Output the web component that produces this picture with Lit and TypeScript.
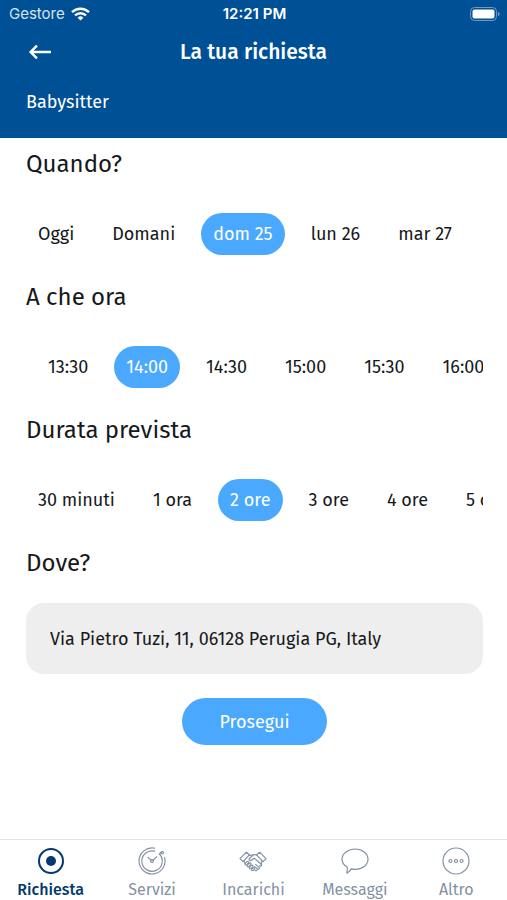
import { LitElement, html, svg, css, nothing } from "lit";
import { customElement, property, state } from "lit/decorators.js";
import { classMap } from "lit/directives/class-map.js";

const uiFont = css`"Fira Sans", "Noto Sans", sans-serif`;

const tabIcons = {
  request: svg`
    <circle cx="14" cy="14" r="12" stroke-width="2"/>
    <circle cx="14" cy="14" r="5" fill="currentColor" stroke="none"/>`,
  services: svg`
    <path d="M16.4 1.2A13 13 0 1 0 26.6 10.6"/>
    <path d="M21.4 7A10.2 10.2 0 1 1 16.6 4.2"/>
    <path d="M21.4 7l2-2"/>
    <circle cx="24.4" cy="5.8" r="1.2"/>
    <path d="M10 10.4l3 2.6M18.8 9.6l-3.8 3.6"/>
    <circle cx="14" cy="14" r="1.4"/>`,
  jobs: svg`
    <path d="M1 11.6L7.4 5.2l3 2.6-6.4 6.8z"/>
    <path d="M27 11.6l-6.4-6.4-3 2.6 6.4 6.8z"/>
    <path d="M10 8.2c1.6.4 2.6.2 4-.4 1.6-.6 2.8 0 4.2.4"/>
    <path d="M14.4 7.8l-4.2 4c-.6 1 .8 2.2 2 1.6l3-2.2 7 6c1 1.2-.6 2.6-1.8 1.6"/>
    <path d="M5 13.8l1.2 2.4M23 14l-1 3"/>
    <path d="M6.2 16.4l1.8-1.8c1-.8 2.2.4 1.4 1.4l-1.4 1.6c-1.2 1-2.6-.2-1.8-1.2zM8.4 18.2l2-2c1-.8 2.2.4 1.4 1.4l-1.8 2c-1.2.8-2.4-.4-1.6-1.4zM10.6 20.2l1.8-1.8c1-.8 2.2.4 1.4 1.4l-1.6 1.8c-1.2.8-2.4-.4-1.6-1.4zM12.8 22l1.2-1.2c1-.8 2.2.4 1.4 1.4l-1 1.2c-1 .8-2.4-.4-1.6-1.4z"/>
    <path d="M16.6 17.4l3.6 3c.6 1.2-.6 2.2-1.8 1.4l-2.8-2.2M18.2 22c.4 1.4-1 2-2.2 1.4"/>`,
  messages: svg`
    <path d="M14.200 2C21.200 2 27 6.400 27 12.200S21.200 22.400 14.200 22.400c-1.400 0-2.800-.2-4-.5-1.400 2.300-2.800 3.700-4.400 4.300.5-2 .7-4 .4-6.200C3 18.200 1 15.400 1 12.200 1 6.400 7.200 2 14.200 2z"/>`,
  more: svg`
    <circle cx="14" cy="14" r="13"/>
    <circle cx="8.400" cy="14" r="1.500"/>
    <circle cx="14" cy="14" r="1.500"/>
    <circle cx="19.600" cy="14" r="1.500"/>`,
};

type TabId = keyof typeof tabIcons;

@customElement("chip-group")
class ChipGroup extends LitElement {
  @property() heading = "";
  @property({ attribute: false }) options: string[] = [];
  @property() selected = "";
  @property({ type: Boolean }) inset = false;

  static styles = css`
    :host {
      display: block;
    }
    .heading {
      margin: 0 0 33px;
      font-size: 24px;
      line-height: 32px;
      font-weight: 400;
    }
    .row {
      display: flex;
      gap: 14px;
      overflow-x: auto;
      scrollbar-width: none;
    }
    .inset {
      padding-left: 10px;
    }
    .chip {
      flex: none;
      height: 42px;
      padding: 0 12px;
      border: 0;
      border-radius: 21px;
      background: transparent;
      color: inherit;
      font: inherit;
      white-space: nowrap;
      cursor: pointer;
    }
    .on {
      background: #4aa9ff;
      color: #fff;
    }
  `;

  render() {
    return html`
      <h2 class="heading" id="heading">${this.heading}</h2>
      <div class=${classMap({ row: true, inset: this.inset })} role="group" aria-labelledby="heading">
        ${this.options.map(
          (option) => html`<button
            type="button"
            class=${classMap({ chip: true, on: option === this.selected })}
            aria-pressed=${option === this.selected}
            @click=${() => (this.selected = option)}
          >${option}</button>`
        )}
      </div>
    `;
  }
}

@customElement("tab-bar")
class TabBar extends LitElement {
  @state() current: TabId = "request";

  private tabs: { id: TabId; label: string }[] = [
    { id: "request", label: "Richiesta" },
    { id: "services", label: "Servizi" },
    { id: "jobs", label: "Incarichi" },
    { id: "messages", label: "Messaggi" },
    { id: "more", label: "Altro" },
  ];

  static styles = css`
    :host {
      display: block;
    }
    .tabs {
      display: grid;
      grid-template-columns: repeat(5, 1fr);
      height: 60px;
      border-top: 1px solid #e4e5e6;
    }
    .tab {
      display: flex;
      flex-direction: column;
      align-items: center;
      gap: 4px;
      padding-top: 7px;
      color: #8492a3;
      font-size: 16px;
      line-height: 22px;
      text-decoration: none;
    }
    .current {
      color: #06396f;
      font-weight: 500;
    }
    .icon {
      flex: none;
      width: 28px;
      height: 28px;
      fill: none;
      stroke: currentColor;
      stroke-width: 1.2;
      stroke-linecap: round;
      stroke-linejoin: round;
    }
  `;

  render() {
    return html`
      <nav class="tabs" aria-label="Principale">
        ${this.tabs.map(
          ({ id, label }) => html`<a
            href="#${id}"
            class=${classMap({ tab: true, current: id === this.current })}
            aria-current=${id === this.current ? "page" : nothing}
            @click=${() => (this.current = id)}
          ><svg class="icon" viewBox="0 0 28 28" aria-hidden="true">${tabIcons[id]}</svg>${label}</a>`
        )}
      </nav>
    `;
  }
}

@customElement("app-root")
class AppRoot extends LitElement {
  static styles = css`
    :host {
      display: flex;
      flex-direction: column;
      min-height: 100vh;
      background: #fff;
      color: #16191c;
      font-family: ${uiFont};
      font-size: 18px;
      line-height: 24px;
    }
    .top {
      padding-bottom: 24px;
      background: #005096;
      color: #fff;
    }
    .status {
      display: grid;
      grid-template-columns: 1fr auto 1fr;
      align-items: center;
      height: 28px;
      padding: 0 7px 0 9px;
      font-family: Inter, sans-serif;
      font-size: 15px;
      line-height: 20px;
    }
    .carrier {
      display: flex;
      align-items: center;
      gap: 6px;
      color: #d5e4f1;
    }
    .clock {
      font-weight: 600;
    }
    .battery {
      justify-self: end;
    }
    .bar {
      display: grid;
      grid-template-columns: 1fr auto 1fr;
      align-items: center;
      height: 48px;
      padding: 0 26px;
    }
    .back {
      display: flex;
      justify-self: start;
      padding: 4px 2px;
      border: 0;
      background: none;
      color: inherit;
      cursor: pointer;
    }
    .title {
      margin: 0;
      font-size: 21px;
      line-height: 28px;
      font-weight: 500;
    }
    .service {
      margin: 14px 26px 0;
    }
    .form {
      display: flex;
      flex: 1;
      flex-direction: column;
      gap: 26px;
      padding: 10px 24px 26px 26px;
    }
    .place {
      display: flex;
      flex-direction: column;
      gap: 24px;
    }
    .place-label {
      font-size: 24px;
      line-height: 32px;
    }
    .address {
      box-sizing: border-box;
      width: 100%;
      height: 71px;
      padding: 0 24px;
      border: 0;
      border-radius: 18px;
      background: #eee;
      color: inherit;
      font: inherit;
    }
    .submit {
      align-self: center;
      height: 47px;
      padding: 0 38px;
      border: 0;
      border-radius: 24px;
      background: #4aa9ff;
      color: #fff;
      font: inherit;
      cursor: pointer;
    }
  `;

  render() {
    return html`
      <header class="top">
        <div class="status">
          <span class="carrier">Gestore
            <svg width="19" height="14" viewBox="0 0 19 14" fill="none" stroke="#fff" stroke-width="2.400" aria-hidden="true">
              <path d="M1 5.200a12.200 12.200 0 0 1 17 0"/>
              <path d="M4 8.400a8 8 0 0 1 11 0"/>
              <path d="M9.500 13.600L6.600 10.700a4.200 4.200 0 0 1 5.800 0z" fill="#fff" stroke="none"/>
            </svg>
          </span>
          <span class="clock">12:21 PM</span>
          <svg class="battery" width="30" height="14" viewBox="0 0 30 14" aria-hidden="true">
            <rect x=".5" y=".5" width="26" height="13" rx="4" fill="none" stroke="#6f9dc6"/>
            <rect x="2.500" y="2.500" width="22" height="9" rx="2" fill="#fff"/>
            <path d="M28 4.800c2.200.8 2.200 3.600 0 4.400z" fill="#6f9dc6"/>
          </svg>
        </div>
        <div class="bar">
          <button class="back" type="button" aria-label="Indietro">
            <svg width="24" height="16" viewBox="0 0 24 16" fill="none" stroke="currentColor" stroke-width="2.400" aria-hidden="true">
              <path d="M23 8H3M9 1.600L2.600 8 9 14.400"/>
            </svg>
          </button>
          <h1 class="title">La tua richiesta</h1>
        </div>
        <p class="service">Babysitter</p>
      </header>
      <main class="form">
        <chip-group
          heading="Quando?"
          .options=${["Oggi", "Domani", "dom 25", "lun 26", "mar 27"]}
          selected="dom 25"
        ></chip-group>
        <chip-group
          heading="A che ora"
          inset
          .options=${["13:30", "14:00", "14:30", "15:00", "15:30", "16:00"]}
          selected="14:00"
        ></chip-group>
        <chip-group
          heading="Durata prevista"
          .options=${["30 minuti", "1 ora", "2 ore", "3 ore", "4 ore", "5 ore"]}
          selected="2 ore"
        ></chip-group>
        <div class="place">
          <label class="place-label" for="address">Dove?</label>
          <input class="address" id="address" type="text" value="Via Pietro Tuzi, 11, 06128 Perugia PG, Italy" />
          <button class="submit" type="button">Prosegui</button>
        </div>
      </main>
      <tab-bar></tab-bar>
    `;
  }
}
